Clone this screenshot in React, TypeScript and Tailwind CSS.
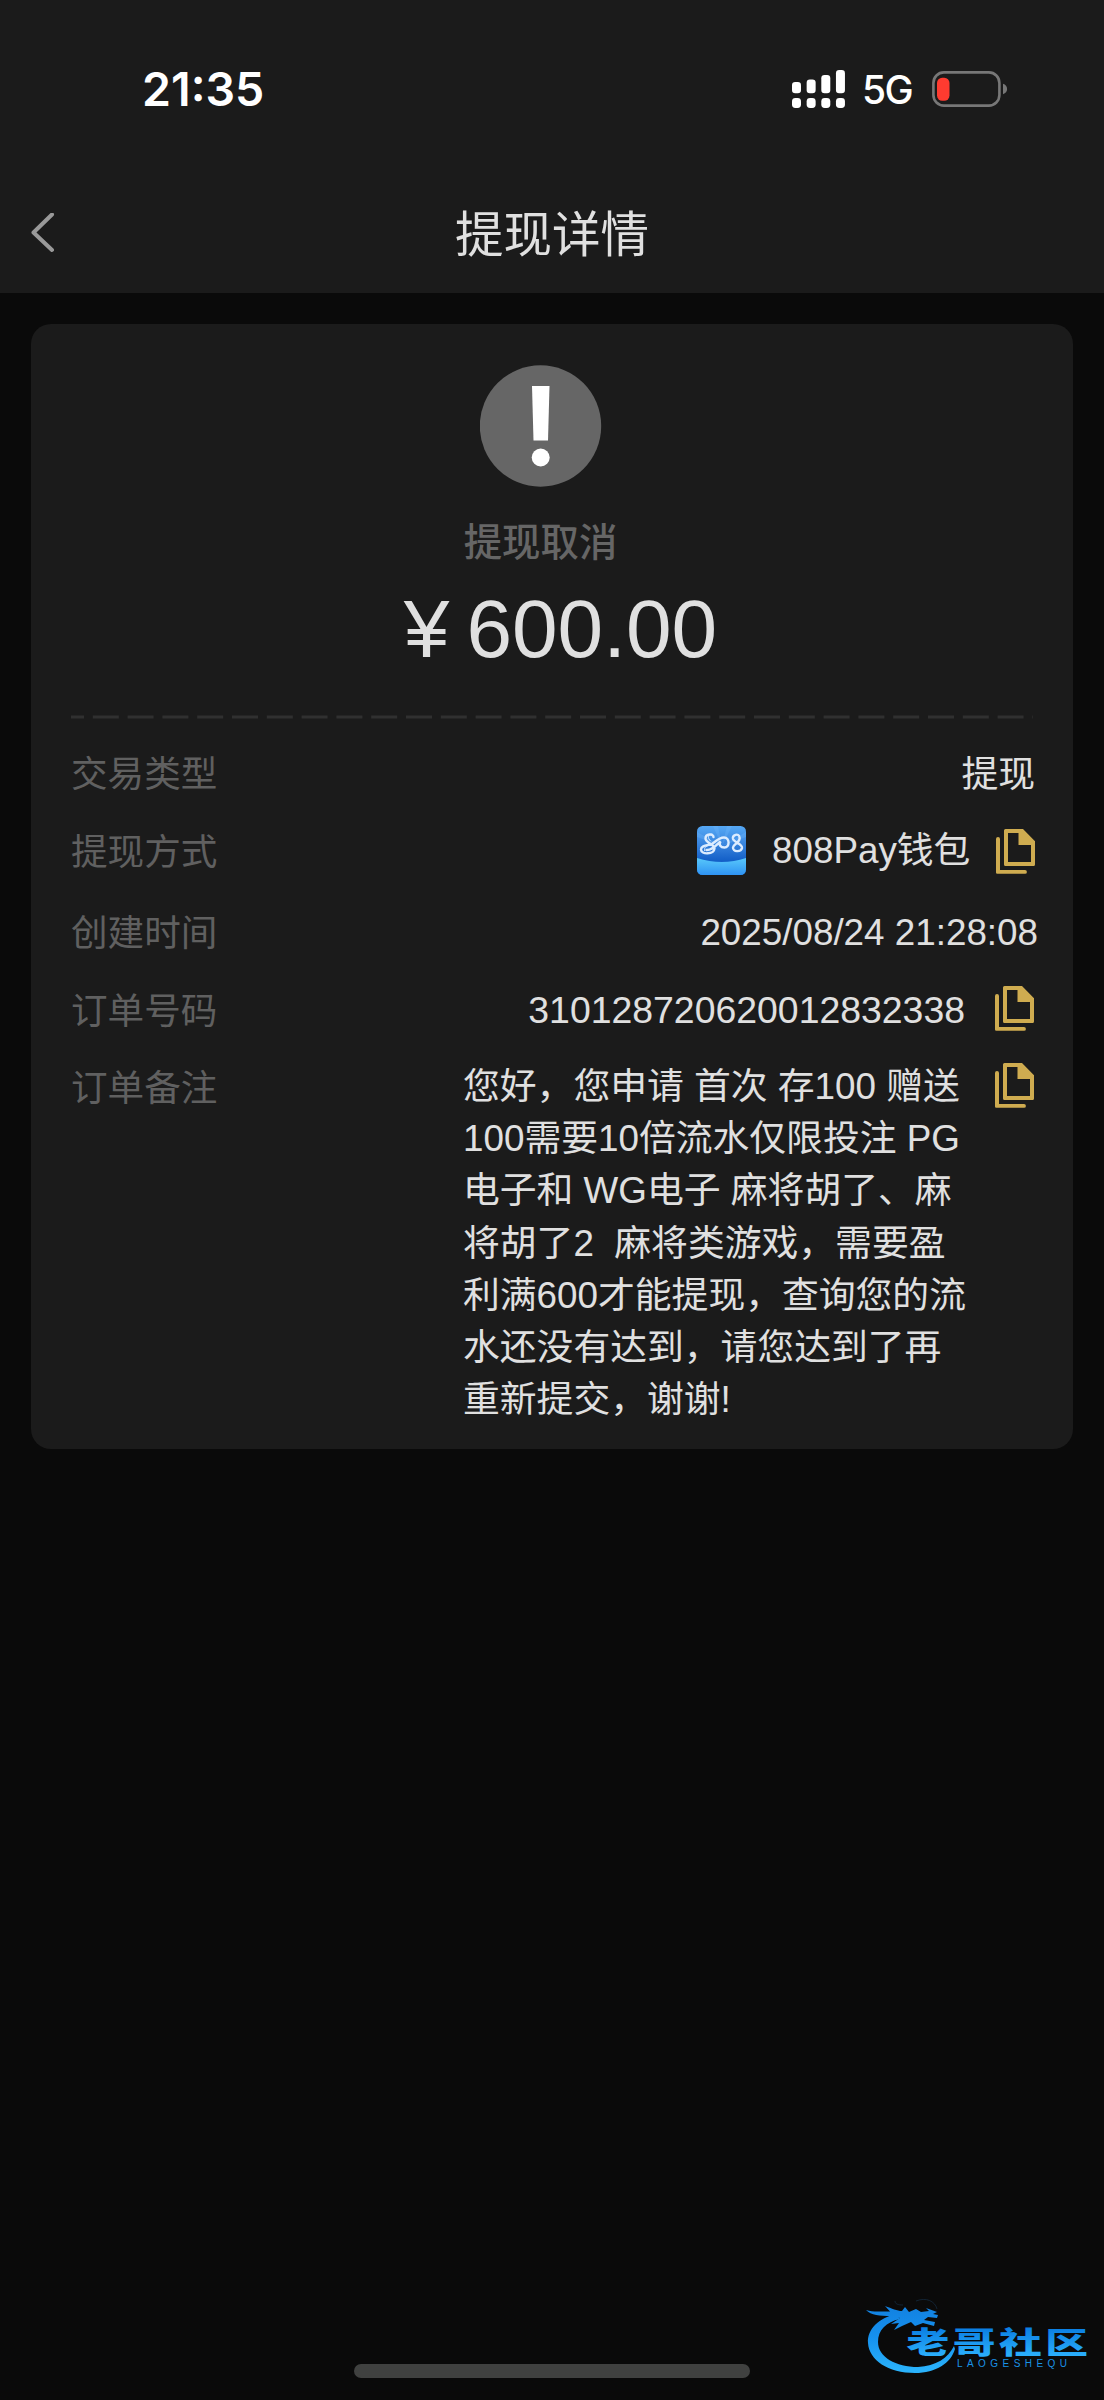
import type { ReactNode } from "react";

function SignalIcon() {
  const tops = [12, 9.5, 5, 0];
  return (
    <svg className="h-[38px] w-[53px]" viewBox="0 0 53 38" fill="#fff">
      {tops.map((top, i) => (
        <g key={i}>
          <rect x={i * 14.65} y={top} width="9" height={23.3 - top} rx="3.2" />
          <rect x={i * 14.65} y="28" width="9" height="10" rx="3.4" />
        </g>
      ))}
    </svg>
  );
}

function BatteryIcon() {
  return (
    <svg className="h-[36px] w-[76px]" viewBox="0 0 76 36">
      <rect x="1.4" y="1.4" width="66" height="33.2" rx="10.5" fill="none" stroke="#777" strokeWidth="2.6" />
      <rect x="5" y="6.7" width="12.5" height="23" rx="5.2" fill="#ff3b30" />
      <path d="M71 12.800c2.600.9 4.100 2.800 4.100 5.200s-1.500 4.300-4.100 5.200z" fill="#777" />
    </svg>
  );
}

function CopyIcon() {
  return (
    <svg className="h-[45px] w-[39px] shrink-0" viewBox="0 0 39 45" fill="#cfac50">
      <path
        fillRule="evenodd"
        d="M9.500 0H27L39 12.200V35.500a1.500 1.500 0 0 1-1.500 1.500H9.500A1.500 1.500 0 0 1 8 35.500V1.500A1.500 1.500 0 0 1 9.500 0ZM12 4V33H35V16H22.500V4Z"
      />
      <path d="M0 10a1.900 1.900 0 0 1 4 0V41H29a1.900 1.900 0 0 1 0 3.800H1.300A1.300 1.300 0 0 1 0 43.500Z" />
    </svg>
  );
}

function WalletLogo() {
  return (
    <svg className="h-[49px] w-[49px] shrink-0" viewBox="0 0 49 49">
      <defs>
        <linearGradient id="sky" x1="0" y1="0" x2="0" y2="1">
          <stop offset="0" stopColor="#55a8f5" />
          <stop offset=".35" stopColor="#3a86df" />
          <stop offset=".7" stopColor="#1460c8" />
        </linearGradient>
        <linearGradient id="sea" x1="0" y1="0" x2="0" y2="1">
          <stop offset="0" stopColor="#58c8fb" />
          <stop offset="1" stopColor="#2f93f3" />
        </linearGradient>
        <clipPath id="tile">
          <rect width="49" height="49" rx="5.500" />
        </clipPath>
      </defs>
      <g clipPath="url(#tile)">
        <rect width="49" height="49" fill="url(#sky)" />
        <path d="M25 20 16 0h5zM25 20 30 0h5zM25 20 0 6v5zM25 20 49 6v5z" fill="#7cc0ff" opacity=".25" />
        <path d="M0 32Q25 40 49 32V49H0Z" fill="url(#sea)" />
      </g>
      <g fill="none" stroke="#dcecff" strokeLinecap="round">
        <path
          strokeWidth="2.400"
          d="M16.500 11C16.500 7.500 8.500 7.500 8.500 12.500C8.500 17 17.500 18 17.500 22.500C17 28.500 4 29 4 23.500C4 19.500 10 19.500 15 18C16.500 17 22 11.500 27 11.500C33 11.500 33 21.500 27.500 21.500C23.500 21.500 21.500 19 23.500 15.500C20 18 16 24.500 9.500 24"
        />
        <path
          strokeWidth="2.400"
          d="M42.500 11C42 7 35 8.500 36 13C37 16.500 45.500 17.500 45 22C44 26.500 35.500 26 36 21.500C36.500 17.500 44 16.500 42.500 11Z"
        />
        <path strokeWidth="1" d="M15 8C11 8 10 12 13.500 15M14 19.500C10 19 7 21 7.500 24.500" />
      </g>
    </svg>
  );
}

function ForumMark() {
  return (
    <svg className="h-[84px] w-[234px]" viewBox="0 0 234 84">
      <defs>
        <linearGradient id="ring" gradientUnits="userSpaceOnUse" x1="0" y1="8" x2="0" y2="76">
          <stop offset="0" stopColor="#127fdf" />
          <stop offset=".5" stopColor="#1590ee" />
          <stop offset="1" stopColor="#2ab2fb" />
        </linearGradient>
        <linearGradient id="word" gradientUnits="userSpaceOnUse" x1="0" y1="-28" x2="0" y2="3">
          <stop offset="0" stopColor="#0a7de2" />
          <stop offset="1" stopColor="#2aaefb" />
        </linearGradient>
      </defs>
      <g fill="url(#ring)">
        <path d="M30 20C13 24 1 35 2 49C3 66 22 79 49 79C70 79 85 69 89 55L88 52C82 64 70 72 52 73C30 73 12 63 12 48C12 36 20 28 34 25Z" />
        <path d="M0 16C8 18.500 15 17 24 17.500L19 12C26 14.500 31 17 36 17L39 13L43 18L50 15L55 18L63 17L60 14L71 18L67 20L72 21L71 24L62 23L58 26L69 28L68 32L57 29L49 32L45 28L36 32L28 36L33 29L25 30L34 24L25 22C14 22 5 21.500 0 16Z" />
      </g>
      <path d="M50 7C60 3 69 7 71 15M29 7C29 10 32 11 37 11" stroke="#14293d" strokeWidth=".8" fill="none" />
      <text
        transform="translate(40.500 58.500) scale(1.315 .9)"
        fontFamily="'Noto Sans CJK SC', sans-serif"
        fontSize="32.500"
        fontWeight="900"
        letterSpacing="2.700"
        fill="url(#word)"
      >
        老哥社区
      </text>
      <text
        x="91"
        y="72.500"
        fontFamily="'Liberation Sans', sans-serif"
        fontSize="10"
        fontWeight="400"
        textLength="110"
        fill="#1a92e6"
      >
        LAOGESHEQU
      </text>
    </svg>
  );
}

function Label({ children }: { children: ReactNode }) {
  return <span className="pt-[1px] text-[36.600px] text-[#606060]">{children}</span>;
}

const noteLines = [
  "您好，您申请 首次 存100 赠送",
  "100需要10倍流水仅限投注 PG",
  "电子和 WG电子 麻将胡了、麻",
  "将胡了2  麻将类游戏，需要盈",
  "利满600才能提现，查询您的流",
  "水还没有达到，请您达到了再",
  "重新提交，谢谢!",
];

export default function App() {
  return (
    <div className="flex h-[2400px] w-[1104px] flex-col bg-[#0a0a0a] font-['Liberation_Sans','Noto_Sans_CJK_SC',sans-serif] text-[#e0e0e0]">
      <header className="h-[293px] shrink-0 bg-[#1b1b1b]">
        <div className="flex h-[178px] items-center justify-between pr-[96px] pl-[142px] font-['Inter',sans-serif] text-white">
          <span className="pt-[1px] text-[46.500px] font-semibold">21:35</span>
          <div className="flex items-center">
            <SignalIcon />
            <span className="ml-[17px] w-[52px] pt-[3px] text-[39px] font-medium tracking-[-1.5px]">5G</span>
            <span className="ml-[18px] flex">
              <BatteryIcon />
            </span>
          </div>
        </div>
        <div className="grid h-[110px] grid-cols-[1fr_auto_1fr] items-center px-[30px]">
          <svg className="h-[40px] w-[26px]" viewBox="0 0 26 40" fill="none" stroke="#999" strokeWidth="4" strokeLinecap="round" strokeLinejoin="round">
            <path d="M22 1.500 3.500 19.500 22 37" />
          </svg>
          <h1 className="pt-[3px] text-[48.500px] leading-[60px]">提现详情</h1>
        </div>
      </header>

      <main className="mx-[31px] mt-[31px] h-[1125px] w-[1042px] rounded-[20px] bg-[#1b1b1b] px-[40px] pt-[41px]">
        <section className="flex flex-col items-center pr-[23px]">
          <svg className="h-[122px] w-[122px]" viewBox="0 0 122 122">
            <circle cx="60.500" cy="61" r="60.700" fill="#666" />
            <path d="M52 21h17.500l-1.500 54.500h-14.500z" fill="#fff" />
            <circle cx="60.700" cy="92.500" r="9" fill="#fff" />
          </svg>
          <p className="mt-[26px] text-[38.400px] leading-[60px] font-medium text-[#666]">提现取消</p>
          <p className="mt-[11px] ml-[40px] flex gap-[17px] text-[82px] leading-[90px]">
            <span>¥</span>
            <span>600.00</span>
          </p>
        </section>
        <svg className="mt-[41px] block h-[4px] w-[962px]" viewBox="0 0 962 4">
          <path d="M0 2H962" stroke="#303030" strokeWidth="3" strokeDasharray="26 8.800" strokeDashoffset="13" />
        </svg>

        <section className="leading-[52px]">
          <div className="mt-[29px] flex h-[78px] justify-between">
            <Label>交易类型</Label>
            <span className="-mr-[2px] pt-[1px] text-[36.800px]">提现</span>
          </div>
          <div className="flex h-[81px] justify-between">
            <Label>提现方式</Label>
            <div className="-mt-[1px] -mr-[2px] flex h-[52px] items-center">
              <span className="mb-[2px] flex">
                <WalletLogo />
              </span>
              <span className="ml-[26px] w-[198px] text-[36.800px] whitespace-nowrap">808Pay钱包</span>
              <span className="ml-[26px] flex">
                <CopyIcon />
              </span>
            </div>
          </div>
          <div className="flex h-[78px] justify-between">
            <Label>创建时间</Label>
            <span className="-mr-[5px] text-[36.800px]">2025/08/24 21:28:08</span>
          </div>
          <div className="flex h-[77px] justify-between">
            <Label>订单号码</Label>
            <div className="-mt-[1px] -mr-[1px] flex h-[52px] items-center">
              <span className="text-[37.400px]">310128720620012832338</span>
              <span className="mb-[3px] ml-[30px] flex">
                <CopyIcon />
              </span>
            </div>
          </div>
          <div className="flex justify-between">
            <Label>订单备注</Label>
            <div className="-mr-[1px] flex items-start">
              <div className="-mt-[1px] w-[532px] text-[36.800px] leading-[52.200px] whitespace-pre">
                {noteLines.map((line) => (
                  <div key={line}>{line}</div>
                ))}
              </div>
              <span className="mt-[1px] flex">
                <CopyIcon />
              </span>
            </div>
          </div>
        </section>
      </main>

      <footer className="mt-auto flex h-[100px] items-end justify-end pr-[4px] pb-[22px]">
        <div className="mr-[116px] h-[14px] w-[396px] rounded-full bg-[#404140]" />
        <ForumMark />
      </footer>
    </div>
  );
}
